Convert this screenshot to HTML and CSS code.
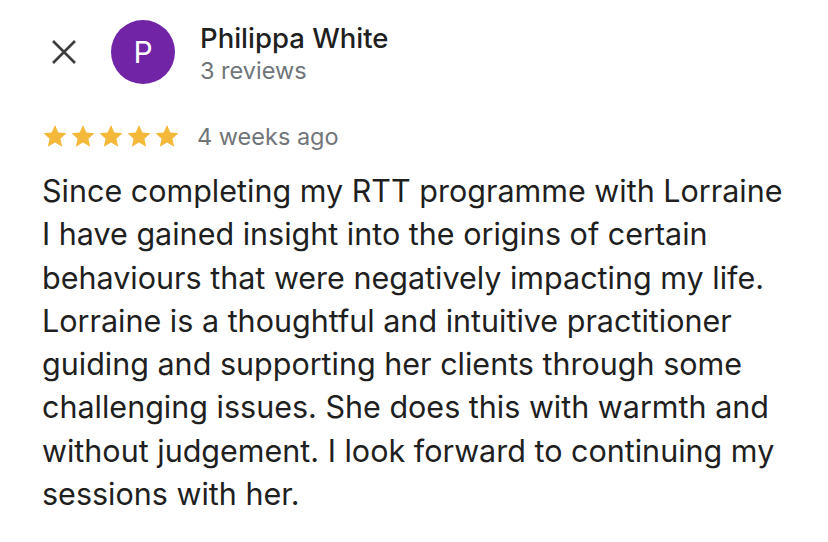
FILE: index.html
```html
<!DOCTYPE html>
<html>
<head>
<meta charset="utf-8">
<link rel="stylesheet" href="styles.css">
</head>
<body>
<div class="card">
  <div class="header">
    <div class="close">
      <svg width="28" height="28" viewBox="0 0 28 28"><path d="M3 3 L25 25 M25 3 L3 25" stroke="#3c3c3c" stroke-width="2.6" stroke-linecap="butt"/></svg>
    </div>
    <div class="avatar">P</div>
    <div class="who">
      <div class="name">Philippa White</div>
      <div class="count">3 reviews</div>
    </div>
  </div>
  <div class="meta">
    <div class="stars">
      <svg viewBox="0 0 24 24"><path d="M12 1.8l3.1 6.9 7.5.8-5.6 5 1.6 7.4L12 18.1l-6.6 3.8 1.6-7.4-5.6-5 7.5-.8z"/></svg>
      <svg viewBox="0 0 24 24"><path d="M12 1.8l3.1 6.9 7.5.8-5.6 5 1.6 7.4L12 18.1l-6.6 3.8 1.6-7.4-5.6-5 7.5-.8z"/></svg>
      <svg viewBox="0 0 24 24"><path d="M12 1.8l3.1 6.9 7.5.8-5.6 5 1.6 7.4L12 18.1l-6.6 3.8 1.6-7.4-5.6-5 7.5-.8z"/></svg>
      <svg viewBox="0 0 24 24"><path d="M12 1.8l3.1 6.9 7.5.8-5.6 5 1.6 7.4L12 18.1l-6.6 3.8 1.6-7.4-5.6-5 7.5-.8z"/></svg>
      <svg viewBox="0 0 24 24"><path d="M12 1.8l3.1 6.9 7.5.8-5.6 5 1.6 7.4L12 18.1l-6.6 3.8 1.6-7.4-5.6-5 7.5-.8z"/></svg>
    </div>
    <div class="when">4 weeks ago</div>
  </div>
  <p class="text">Since completing my RTT programme with Lorraine<br>I have gained insight into the origins of certain<br>behaviours that were negatively impacting my life.<br>Lorraine is a thoughtful and intuitive practitioner<br>guiding and supporting her clients through some<br>challenging issues. She does this with warmth and<br>without judgement. I look forward to continuing my<br>sessions with her.</p>
</div>
</body>
</html>
```
FILE: styles.css
```css
html, body {
  margin: 0;
  padding: 0;
  background: #ffffff;
}
body {
  font-family: Inter, Roboto, "Liberation Sans", sans-serif;
  width: 828px;
  height: 542px;
  overflow: hidden;
}
.card {
  padding: 20px 0 0 42px;
}
.header {
  display: flex;
  align-items: center;
  height: 64px;
}
.close {
  width: 28px;
  height: 28px;
  margin-left: 8px;
  display: flex;
}
.avatar {
  width: 64px;
  height: 64px;
  border-radius: 50%;
  background: #7124a6;
  color: #ffffff;
  font-size: 30px;
  display: flex;
  align-items: center;
  justify-content: center;
  margin-left: 33px;
}
.who {
  align-self: flex-start;
  margin-left: 25px;
  margin-top: 3px;
}
.name {
  font-size: 27.5px;
  font-weight: 500;
  color: #1f1f1f;
  line-height: 30px;
}
.count {
  font-size: 23.5px;
  color: #70757a;
  line-height: 28px;
  margin-top: 4px;
}
.meta {
  display: flex;
  align-items: center;
  margin-top: 38px;
  height: 28px;
}
.stars {
  display: flex;
  gap: 2px;
}
.stars svg {
  width: 26px;
  height: 26px;
  fill: #f4b93b;
}
.when {
  margin-left: 17px;
  font-size: 23.5px;
  color: #70757a;
}
.text {
  margin: 19px 0 0 0;
  font-size: 30.5px;
  line-height: 43.3px;
  color: #1f1f1f;
}
```
